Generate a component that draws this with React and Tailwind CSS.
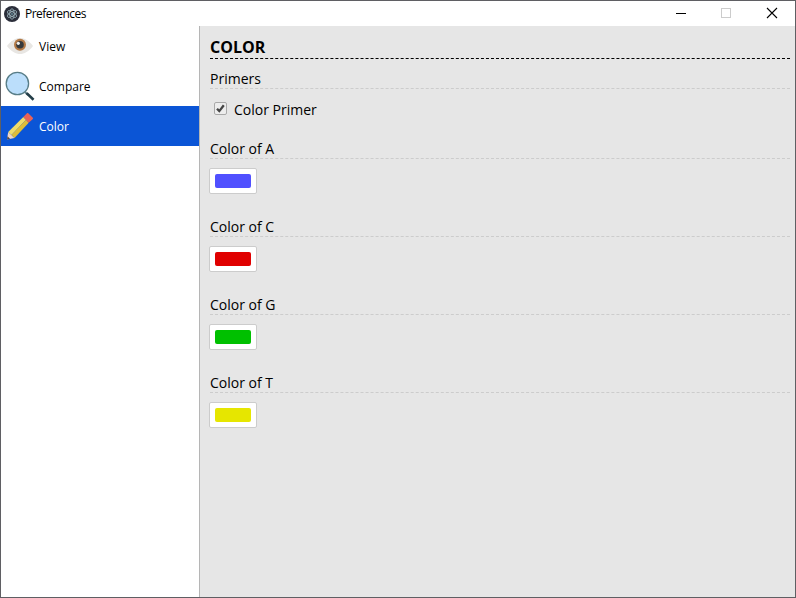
import React from "react";

function ElectronIcon() {
  return (
    <svg className="size-4 shrink-0" viewBox="0 0 16 16" fill="none">
      <circle cx="8" cy="8" r="8" fill="#2b2e3a" />
      <g stroke="#a3bcc4" strokeWidth="0.75">
        <ellipse cx="8" cy="8" rx="5.200" ry="2.200" transform="rotate(30 8 8)" />
        <ellipse cx="8" cy="8" rx="5.200" ry="2.200" transform="rotate(90 8 8)" />
        <ellipse cx="8" cy="8" rx="5.200" ry="2.200" transform="rotate(150 8 8)" />
      </g>
      <circle cx="8" cy="8" r="0.7" fill="#9feaf9" />
    </svg>
  );
}

function EyeIcon() {
  return (
    <svg className="h-8 w-8 shrink-0" viewBox="0 0 32 32">
      <path d="M3 16C7 10.500 12 8 16 8s9 2.500 13 8c-4 5.500-9 8-13 8S7 21.500 3 16z" fill="#e8e6e3" />
      <circle cx="16" cy="14.800" r="6" fill="#b27946" />
      <circle cx="16" cy="14.800" r="3.800" fill="#35383a" />
      <circle cx="14.300" cy="13.300" r="1.600" fill="#f1f1ef" />
    </svg>
  );
}

function LensIcon() {
  return (
    <svg className="h-8 w-8 shrink-0" viewBox="0 0 32 32">
      <path d="M21 22l3 3" stroke="#67858e" strokeWidth="2" />
      <path d="M23.500 24L28.600 28.800" stroke="#243e48" strokeWidth="2.600" strokeLinecap="square" />
      <circle cx="13.400" cy="13.500" r="11.200" fill="#bbdefb" stroke="#587d87" strokeWidth="1.300" />
    </svg>
  );
}

function PencilIcon() {
  return (
    <svg className="h-8 w-8 shrink-0" viewBox="0 0 32 32">
      <path d="M3 29.500l1.200-7.500L10.500 28z" fill="#f2d6c4" />
      <path d="M3 29.500l.5-3.200L6.200 29z" fill="#4b4546" />
      <path d="M4.200 22L19.300 7l2.700 2.800L7.500 25z" fill="#f0dc69" />
      <path d="M7.500 25L22 9.800l2.700 2.900L10.500 28z" fill="#dfbd38" />
      <path d="M19.300 7l3.400-3.500c.6-.6 1.200-.6 1.800 0l4.100 4c.6.600.6 1.200 0 1.800l-3.900 3.400z" fill="#e96257" />
    </svg>
  );
}

function NavItem({ icon, label, active }) {
  return (
    <li className={active ? "flex h-10 items-center bg-[#0b55d6] pl-[3px] text-white" : "flex h-10 items-center pl-[3px] text-black"}>
      {icon}
      <span className={active ? "ml-[3px] mt-[2px] text-[12px] font-medium leading-4" : "ml-[3px] mt-[2px] text-[12px] leading-4"}>{label}</span>
    </li>
  );
}

function ColorField({ label, swatch }) {
  return (
    <section className="h-[78px]">
      <h2 className="h-[19px] border-b border-dashed border-[#cccccc] text-[14px] leading-[17px]">{label}</h2>
      <button className="-ml-px mt-[9px] block h-[26px] w-12 rounded-[2px] border border-[#cccccc] bg-white px-[5px] py-[5px]">
        <span className={"block h-[14px] w-9 rounded-[2px] " + swatch} />
      </button>
    </section>
  );
}

export default function App() {
  return (
    <div className="flex h-[598px] w-[796px] flex-col border border-[#5f5f63] bg-white font-['Open_Sans','Noto_Sans',sans-serif] text-black">
      <header className="flex h-[25px] shrink-0 items-center justify-between">
        <div className="flex items-center pl-[3px]">
          <ElectronIcon />
          <span className="ml-[5px] text-[12px] leading-4 tracking-[-0.55px]">Preferences</span>
        </div>
        <svg className="h-[25px] w-[134px]" viewBox="661 1 134 25" fill="none">
          <path d="M676 13.500h10" stroke="#000" shapeRendering="crispEdges" />
          <rect x="721.500" y="8.500" width="9" height="9" stroke="#cccccc" shapeRendering="crispEdges" />
          <path d="M767 8l10 10M777 8l-10 10" stroke="#000" strokeWidth="1.100" />
        </svg>
      </header>
      <div className="flex min-h-0 flex-1">
        <nav className="w-[199px] shrink-0 border-r border-[#b5b5b5]">
          <ul>
            <NavItem icon={<EyeIcon />} label="View" />
            <NavItem icon={<LensIcon />} label="Compare" />
            <NavItem icon={<PencilIcon />} label="Color" active />
          </ul>
        </nav>
        <main className="flex-1 bg-[#e6e6e6] pl-[10px] pr-[5px] pt-[10px]">
          <h1 className="h-[23px] border-b border-dashed border-black text-[16px] font-bold leading-[22px]">COLOR</h1>
          <h2 className="mt-[11px] h-[19px] border-b border-dashed border-[#cccccc] text-[14px] leading-[17px]">Primers</h2>
          <label className="mb-5 mt-[12px] flex h-[19px] items-start text-[14px] leading-[17px]">
            <svg className="ml-1 mt-px h-[13px] w-[13px]" viewBox="0 0 13 13">
              <rect x="0.500" y="0.500" width="12" height="12" rx="1.500" fill="#ededed" stroke="#a9a9a9" />
              <path d="M3 6.700l2.300 2.400 4.500-5.900" fill="none" stroke="#444" strokeWidth="2.300" />
            </svg>
            <span className="ml-[7px]">Color Primer</span>
          </label>
          <ColorField label="Color of A" swatch="bg-[#5050ff]" />
          <ColorField label="Color of C" swatch="bg-[#e00000]" />
          <ColorField label="Color of G" swatch="bg-[#00c000]" />
          <ColorField label="Color of T" swatch="bg-[#e6e600]" />
        </main>
      </div>
    </div>
  );
}
